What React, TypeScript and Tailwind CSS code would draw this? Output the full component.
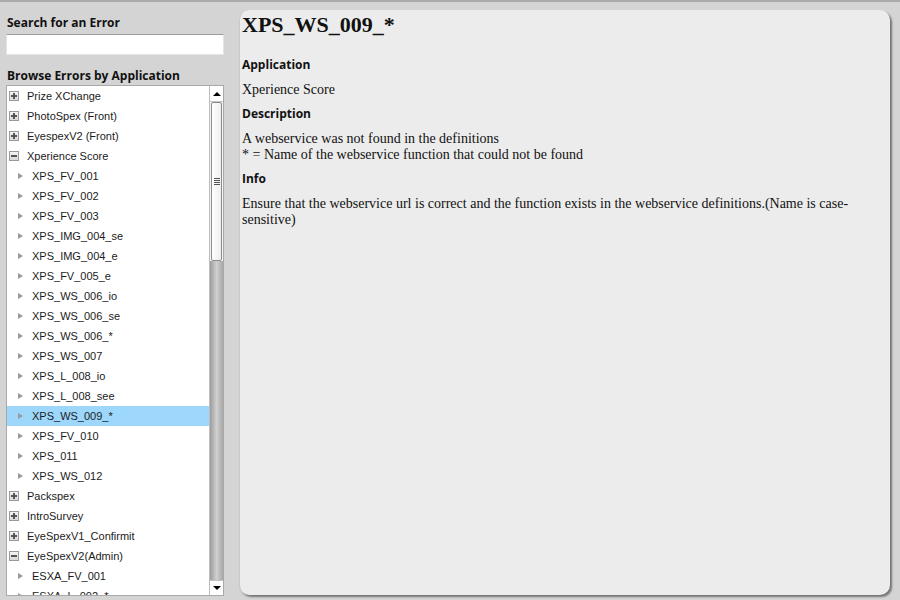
const groups: { name: string; open?: boolean; children?: string[] }[] = [
  { name: 'Prize XChange' },
  { name: 'PhotoSpex (Front)' },
  { name: 'EyespexV2 (Front)' },
  {
    name: 'Xperience Score',
    open: true,
    children: [
      'XPS_FV_001',
      'XPS_FV_002',
      'XPS_FV_003',
      'XPS_IMG_004_se',
      'XPS_IMG_004_e',
      'XPS_FV_005_e',
      'XPS_WS_006_io',
      'XPS_WS_006_se',
      'XPS_WS_006_*',
      'XPS_WS_007',
      'XPS_L_008_io',
      'XPS_L_008_see',
      'XPS_WS_009_*',
      'XPS_FV_010',
      'XPS_011',
      'XPS_WS_012',
    ],
  },
  { name: 'Packspex' },
  { name: 'IntroSurvey' },
  { name: 'EyeSpexV1_Confirmit' },
  { name: 'EyeSpexV2(Admin)', open: true, children: ['ESXA_FV_001', 'ESXA_L_002_*', 'ESXA_FV_003'] },
];

const selected = 'XPS_WS_009_*';

function ToggleBox({ open }: { open?: boolean }) {
  return (
    <span className="relative w-[10px] h-[10px] border border-[#9a9a9a] bg-gradient-to-b from-[#f4f4f4] to-[#d8d8d8] shrink-0">
      <span className="absolute left-[1px] top-[3px] w-[6px] h-[2px] bg-[#555]" />
      {!open && <span className="absolute left-[3px] top-[1px] w-[2px] h-[6px] bg-[#555]" />}
    </span>
  );
}

function Scrollbar() {
  return (
    <div className="w-[14px] h-full flex flex-col shrink-0 border-l border-[#bdbdbd] bg-[#f4f4f4]">
      <div className="h-[16px] flex items-center justify-center border-b border-[#c4c4c4] bg-white">
        <span className="w-0 h-0 border-l-[4px] border-r-[4px] border-b-[4px] border-l-transparent border-r-transparent border-b-black" />
      </div>
      <div className="h-[159px] mx-[1px] flex items-center justify-center rounded-[2px] border border-[#8c8c8c] bg-gradient-to-r from-white to-[#eeeeee]">
        <div className="flex flex-col gap-[1px]">
          <span className="w-[6px] h-[1px] bg-[#555]" />
          <span className="w-[6px] h-[1px] bg-[#555]" />
          <span className="w-[6px] h-[1px] bg-[#555]" />
          <span className="w-[6px] h-[1px] bg-[#555]" />
        </div>
      </div>
      <div className="flex-1 bg-gradient-to-r from-[#9c9c9c] via-[#d0d0d0] to-[#a8a8a8]" />
      <div className="h-[15px] flex items-center justify-center border-t border-[#c4c4c4] bg-white">
        <span className="w-0 h-0 border-l-[4px] border-r-[4px] border-t-[4px] border-l-transparent border-r-transparent border-t-black" />
      </div>
    </div>
  );
}

function Tree() {
  return (
    <div className="w-[218px] h-[511px] border border-[#a9a9a9] bg-white flex overflow-hidden">
      <div className="flex-1 overflow-hidden font-['Liberation_Sans',Arial,sans-serif] text-[11px] text-[#1b1b1b]">
        {groups.map((g) => (
          <div key={g.name}>
            <div className="h-[20px] flex items-center gap-[8px] pl-[2px]">
              <ToggleBox open={g.open} />
              <span>{g.name}</span>
            </div>
            {g.open &&
              g.children?.map((c) => (
                <div
                  key={c}
                  className={`h-[20px] flex items-center pl-[11px] ${c === selected ? 'bg-[#9dd7fc]' : ''}`}
                >
                  <span className="w-0 h-0 border-t-[3px] border-b-[3px] border-l-[5px] border-t-transparent border-b-transparent border-l-[#9a9a9a]" />
                  <span className="ml-[9px]">{c}</span>
                </div>
              ))}
          </div>
        ))}
      </div>
      <Scrollbar />
    </div>
  );
}

export default function App() {
  return (
    <div className="w-[900px] h-[600px] bg-[#d4d4d4] border-t-2 border-[#aaaaaa] flex overflow-hidden">
      {/* Sidebar */}
      <div className="w-[232px] pl-[6px] pt-[12px] shrink-0">
        <h2 className="font-['Open_Sans',sans-serif] font-bold text-[12px] leading-[18px] text-[#111] pl-[1px]">
          Search for an Error
        </h2>
        <input
          type="text"
          className="mt-[2px] block w-[218px] h-[21px] bg-white border border-[#e4e4e4] border-t-[#9c9c9c] outline-none px-1 text-[12px]"
        />
        <h2 className="mt-[12px] font-['Open_Sans',sans-serif] font-bold text-[12px] leading-[18px] text-[#111] pl-[1px]">
          Browse Errors by Application
        </h2>
        <Tree />
      </div>

      {/* Detail panel */}
      <div className="mt-[8px] ml-[7px] w-[651px] h-[585px] bg-[#ececec] rounded-[10px] border-l border-[#c8c8c8] shadow-[2px_2px_2px_rgba(0,0,0,0.45)] px-[2px] pt-[1px] text-[#111]">
        <h1 className="font-['Liberation_Serif',serif] font-bold text-[22px] leading-[28px]">XPS_WS_009_*</h1>
        <h3 className="mt-[17px] font-['Open_Sans',sans-serif] font-bold text-[12px] leading-[18px]">Application</h3>
        <p className="mt-[8px] font-['Liberation_Serif',serif] text-[14px] leading-[16px]">Xperience Score</p>
        <h3 className="mt-[7px] font-['Open_Sans',sans-serif] font-bold text-[12px] leading-[18px]">Description</h3>
        <p className="mt-[8px] font-['Liberation_Serif',serif] text-[14px] leading-[16px]">
          A webservice was not found in the definitions
          <br />* = Name of the webservice function that could not be found
        </p>
        <h3 className="mt-[7px] font-['Open_Sans',sans-serif] font-bold text-[12px] leading-[18px]">Info</h3>
        <p className="mt-[8px] font-['Liberation_Serif',serif] text-[14px] leading-[16px] pr-[20px]">
          Ensure that the webservice url is correct and the function exists in the webservice definitions.(Name is
          case-sensitive)
        </p>
      </div>
    </div>
  );
}
